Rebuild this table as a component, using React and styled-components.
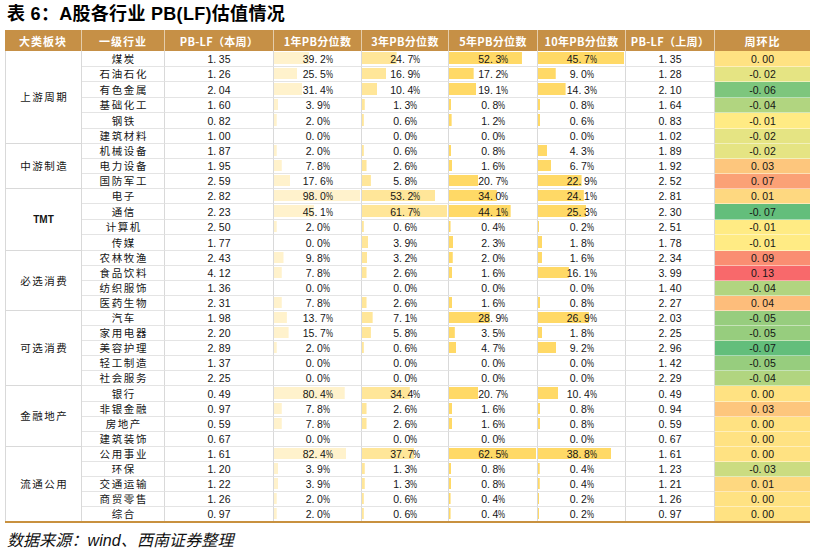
import React from 'react';
import styled, { createGlobalStyle } from 'styled-components';

const GlobalStyle = createGlobalStyle`
  html, body { margin: 0; padding: 0; background: #fff; }
  body { font-family: "Noto Sans CJK SC", sans-serif; color: #111; }
`;

const groups = [
  { name: '上游周期', rows: [
    ['煤炭', 1.35, 39.2, 24.7, 52.3, 45.7, 1.35, 0.00],
    ['石油石化', 1.26, 25.5, 16.9, 17.2, 9.0, 1.28, -0.02],
    ['有色金属', 2.04, 31.4, 10.4, 19.1, 14.3, 2.10, -0.06],
    ['基础化工', 1.60, 3.9, 1.3, 0.8, 0.8, 1.64, -0.04],
    ['钢铁', 0.82, 2.0, 0.6, 1.2, 0.6, 0.83, -0.01],
    ['建筑材料', 1.00, 0.0, 0.0, 0.0, 0.0, 1.02, -0.02],
  ] },
  { name: '中游制造', rows: [
    ['机械设备', 1.87, 2.0, 0.6, 0.8, 4.3, 1.89, -0.02],
    ['电力设备', 1.95, 7.8, 2.6, 1.6, 6.7, 1.92, 0.03],
    ['国防军工', 2.59, 17.6, 5.8, 20.7, 22.9, 2.52, 0.07],
  ] },
  { name: 'TMT', bold: true, rows: [
    ['电子', 2.82, 98.0, 53.2, 34.0, 24.1, 2.81, 0.01],
    ['通信', 2.23, 45.1, 61.7, 44.1, 25.3, 2.30, -0.07],
    ['计算机', 2.50, 2.0, 0.6, 0.4, 0.2, 2.51, -0.01],
    ['传媒', 1.77, 0.0, 3.9, 2.3, 1.8, 1.78, -0.01],
  ] },
  { name: '必选消费', rows: [
    ['农林牧渔', 2.43, 9.8, 3.2, 2.0, 1.6, 2.34, 0.09],
    ['食品饮料', 4.12, 7.8, 2.6, 1.6, 16.1, 3.99, 0.13],
    ['纺织服饰', 1.36, 0.0, 0.0, 0.0, 0.0, 1.40, -0.04],
    ['医药生物', 2.31, 7.8, 2.6, 1.6, 0.8, 2.27, 0.04],
  ] },
  { name: '可选消费', rows: [
    ['汽车', 1.98, 13.7, 7.1, 28.9, 26.9, 2.03, -0.05],
    ['家用电器', 2.20, 15.7, 5.8, 3.5, 1.8, 2.25, -0.05],
    ['美容护理', 2.89, 2.0, 0.6, 4.7, 9.2, 2.96, -0.07],
    ['轻工制造', 1.37, 0.0, 0.0, 0.0, 0.0, 1.42, -0.05],
    ['社会服务', 2.25, 0.0, 0.0, 0.0, 0.0, 2.29, -0.04],
  ] },
  { name: '金融地产', rows: [
    ['银行', 0.49, 80.4, 34.4, 20.7, 10.4, 0.49, 0.00],
    ['非银金融', 0.97, 7.8, 2.6, 1.6, 0.8, 0.94, 0.03],
    ['房地产', 0.59, 7.8, 2.6, 1.6, 0.8, 0.59, 0.00],
    ['建筑装饰', 0.67, 0.0, 0.0, 0.0, 0.0, 0.67, 0.00],
  ] },
  { name: '流通公用', rows: [
    ['公用事业', 1.61, 82.4, 37.7, 62.5, 38.8, 1.61, 0.00],
    ['环保', 1.20, 3.9, 1.3, 0.8, 0.4, 1.23, -0.03],
    ['交通运输', 1.22, 3.9, 1.3, 0.8, 0.4, 1.21, 0.01],
    ['商贸零售', 1.26, 2.0, 0.6, 0.4, 0.2, 1.26, 0.00],
    ['综合', 0.97, 2.0, 0.6, 0.4, 0.2, 0.97, 0.00],
  ] },
];

const headers = ['大类板块', '一级行业', 'PB-LF（本周）', '1年PB分位数', '3年PB分位数', '5年PB分位数', '10年PB分位数', 'PB-LF（上周）', '周环比'];

const rowHeights = [16, 15, 16, 15, 16, 15, 15, 15, 15, 15, 16, 15, 16, 15, 15, 15, 15, 15, 15, 15, 15, 15, 16, 15, 15, 15, 15, 15, 15, 15, 14];

const barColors = ['#FFF2CC', '#FFE699', '#FFD966', '#FFD966'];

const allRows = groups.flatMap((g) => g.rows);
const colMax = [2, 3, 4, 5].map((i) => Math.max(...allRows.map((r) => r[i])));

const RED = [248, 105, 107];
const YELLOW = [255, 235, 132];
const GREEN = [99, 190, 123];
const mix = (a, b, t) => a.map((x, i) => Math.round(x + (b[i] - x) * t));
function scaleColor(v) {
  const mid = -0.01, min = -0.07, max = 0.13;
  const c = v <= mid ? mix(YELLOW, GREEN, (mid - v) / (mid - min)) : mix(YELLOW, RED, (v - mid) / (max - mid));
  return `rgb(${c[0]},${c[1]},${c[2]})`;
}

const Page = styled.div`
  width: 816px;
  height: 553px;
  box-sizing: border-box;
  padding: 0 6px 0 5px;
  display: flex;
  flex-direction: column;
`;

const Title = styled.h1`
  margin: 0;
  height: 30px;
  padding-left: 2px;
  font: bold 18px/28px "Liberation Sans", "Noto Sans CJK SC", sans-serif;
  letter-spacing: 0.3px;
  color: #000;
  white-space: pre;
`;

const Table = styled.div`
  display: grid;
  grid-template-columns: 77px 83px 109px 88px 87px 89px 88px 89px 95px;
  grid-template-rows: 21px ${rowHeights.map((h) => `${h}px`).join(' ')};
  border-bottom: 2px solid #C8913F;
`;

const HeadCell = styled.div`
  background: #C69046;
  color: #fff;
  font: bold 11px/1 "Noto Sans CJK SC", sans-serif;
  letter-spacing: ${(p) => (p.$wide ? '1px' : '0.3px')};
  display: flex;
  align-items: center;
  justify-content: center;
  padding-top: 1px;
  box-sizing: border-box;
  border-right: ${(p) => (p.$last ? 'none' : '1px solid rgba(255,255,255,0.55)')};
  white-space: nowrap;
`;

const Cell = styled.div`
  display: flex;
  align-items: center;
  justify-content: center;
  box-sizing: border-box;
  border-right: 1px solid #D9D9D9;
  border-bottom: ${(p) => (p.$last ? 'none' : '1px solid #E4E4E4')};
  padding-top: 1px;
  white-space: nowrap;
  color: #151515;
`;

const GroupCell = styled(Cell)`
  grid-row: span ${(p) => p.$span};
  border-left: 1px solid #D9D9D9;
  border-bottom: ${(p) => (p.$last ? 'none' : '1px solid #D9D9D9')};
  font: ${(p) => (p.$bold ? 'bold 10px/1 "Liberation Sans", sans-serif' : '10.5px/1 "Noto Sans CJK SC", sans-serif')};
  letter-spacing: ${(p) => (p.$bold ? '0' : '1.5px')};
  padding-left: ${(p) => (p.$bold ? '0' : '1.5px')};
`;

const NameCell = styled(Cell)`
  font: 10.5px/1 "Noto Sans CJK SC", sans-serif;
  letter-spacing: 1.6px;
  padding-left: 1.6px;
`;

const NumCell = styled(Cell)`
  font: 10.5px/1 "Liberation Sans", "Arial", sans-serif;
`;

const Dot = styled.span`
  display: inline-block;
  width: 5.5px;
  text-align: left;
`;

const Pct = styled.span`
  display: inline-block;
  width: 6.5px;
  transform: scaleX(0.75);
  transform-origin: left center;
`;

const BarCell = styled(NumCell)`
  background-repeat: no-repeat;
  background-position: 0 1px;
  background-image: linear-gradient(${(p) => p.$color}, ${(p) => p.$color});
`;

const ChangeCell = styled(NumCell)`
  border-right: none;
  border-bottom: ${(p) => (p.$last ? 'none' : '1px solid rgba(255,255,255,0.45)')};
`;

const Source = styled.p`
  margin: 8px 0 0;
  padding-left: 2px;
  font: italic 16px/20px "Liberation Sans", "Noto Sans CJK SC", sans-serif;
  letter-spacing: 0.1px;
  color: #111;
`;

function Num({ value, digits, pct }) {
  const [a, b] = value.toFixed(digits).split('.');
  return (
    <span>
      {a}<Dot>.</Dot>{b}{pct && <Pct>%</Pct>}
    </span>
  );
}

function Row({ row, isLast }) {
  const [name, now, y1, y3, y5, y10, prev, wow] = row;
  const pcts = [y1, y3, y5, y10];
  return (
    <>
      <NameCell $last={isLast}>{name}</NameCell>
      <NumCell $last={isLast}><Num value={now} digits={2} /></NumCell>
      {pcts.map((v, i) => {
        const frac = v / colMax[i];
        const size = v > 0 ? `calc(${frac.toFixed(4)} * (100% - 2px) + 1px) calc(100% - 3px)` : '0 0';
        return (
          <BarCell key={i} $last={isLast} $color={barColors[i]} style={{ backgroundSize: size }}>
            <Num value={v} digits={1} pct />
          </BarCell>
        );
      })}
      <NumCell $last={isLast}><Num value={prev} digits={2} /></NumCell>
      <ChangeCell $last={isLast} style={{ background: scaleColor(wow) }}>
        <Num value={wow} digits={2} />
      </ChangeCell>
    </>
  );
}

export default function App() {
  return (
    <>
      <GlobalStyle />
      <Page>
        <Title>表 6：A股各行业 PB(LF)估值情况</Title>
        <Table>
          {headers.map((h, i) => (
            <HeadCell key={h} $wide={i < 2 || i === 8} $last={i === headers.length - 1}>{h}</HeadCell>
          ))}
          {groups.map((g, gi) => {
            const lastGroup = gi === groups.length - 1;
            return (
              <React.Fragment key={g.name}>
                <GroupCell $span={g.rows.length} $bold={g.bold} $last={lastGroup}>{g.name}</GroupCell>
                {g.rows.map((r, ri) => (
                  <Row key={r[0]} row={r} isLast={lastGroup && ri === g.rows.length - 1} />
                ))}
              </React.Fragment>
            );
          })}
        </Table>
        <Source>数据来源：wind、西南证券整理</Source>
      </Page>
    </>
  );
}
